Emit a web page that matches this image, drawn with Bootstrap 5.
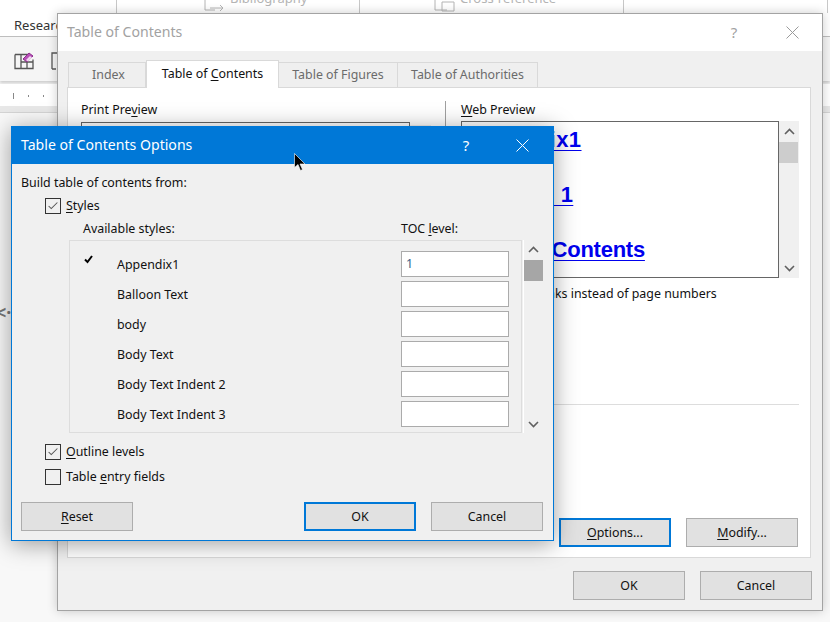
<!DOCTYPE html>
<html lang="en"><head><meta charset="utf-8"><title>Table of Contents Options</title>
<link href="https://cdn.jsdelivr.net/npm/bootstrap@5.3.0/dist/css/bootstrap.min.css" rel="stylesheet">
<style>
html,body{margin:0;height:622px;overflow:hidden;background:#f6f6f6}
body{font:12.4px/16px "Noto Sans",sans-serif;color:#111;position:relative;width:830px}
u{text-underline-offset:2px;text-decoration-thickness:1px}
.desk{height:622px}
.rb-top{height:13px;background:#fff;overflow:hidden;color:#b4b4b4;font-size:13px}
.rb-cell{border-right:1px solid #c8c8c8;height:13px;white-space:nowrap;flex:none}
.rb-cell.c1{width:117px}.rb-cell.c2{width:243px;padding-left:87px}.rb-cell.c3{width:264px;padding-left:74px}.rb-cell.c4{width:204px}
.rb-txt{margin-top:-10px}
.rb-tab{height:24px;background:#fff;padding:4px 0 0 14px;border-bottom:1px solid #bdbdbd;font-size:13px;color:#333}
.rb-tools{height:44px;background:#f5f5f5;padding:14px 0 0 14px;box-shadow:0 2px 3px #ccc}
.rb-ruler{height:22px;margin-top:3px;background:#fff;padding-left:13px;padding-top:11px;gap:14px}
.tick{width:1px;height:2px;background:#888}
.tick.big{height:6px;margin-top:-2px}
.rb-band{height:7px;background:#e8e8e8;border-bottom:1px solid #d4d4d4}
.rb-doc{flex:1;background:#f8f8f8;padding-top:190px;color:#777;font-size:18px;font-weight:700;line-height:18px;overflow:hidden}
.rb-doc span{margin-left:-4px}

.win{position:absolute;background:#f0f0f0}
.outer{left:57px;top:13px;width:766px;height:598px;border:1px solid #a3a3a3;box-shadow:0 0 10px rgba(0,0,0,.2)}
.inner{left:11px;top:126px;width:543px;height:415px;border:1px solid #0078d7;box-shadow:0 3px 22px rgba(0,0,0,.38)}
.ot{height:37px;background:#fff;padding:0 0 1px 9px;font-size:14.1px;color:#a2a2a2}
.it{height:37px;background:#0078d7;color:#fff;padding:0 0 1px 9px;font-size:14.1px}
.tb-q{font-size:15px;width:22px;text-align:center}
.tb-x{margin:0 23px 0 41px;display:block}
.inner .tb-x{margin:0 24px 0 39px}
.tabs{height:36px;padding:10px 0 0 10px;align-items:flex-end}
.tabx{height:25px;background:#efefef;border:1px solid #d9d9d9;border-bottom:0;border-left-width:0;color:#6b6b6b;text-align:center;line-height:24px;flex:none}
.tabx.t1{width:78px;border-left-width:1px;padding-left:3px}.tabx.t2{width:133px;height:28px;margin-bottom:-1px;background:#fff;color:#111;border-left:1px solid #d9d9d9;line-height:26px;position:relative;z-index:1}.tabx.t3{width:119px}.tabx.t4{width:140px}
.panel{margin-left:9px;width:744px;height:471px;background:#fff;border:1px solid #d9d9d9;padding:13px 12px 10px 13px}
.pcol{width:329px;flex:none}
.lb{height:21px;line-height:18px}
.lb.web{height:20px}
.ppbox{height:180px;border:1px solid #666;background:#fff}
.ppbar{width:21px;height:180px;background:#efefef;flex:none}
.vdiv{width:1px;background:#a0a0a0;height:200px;margin-left:14px;margin-right:15px;flex:none}
.wcol{flex:none;margin-right:-1px}
.wrow{height:157px}
.wbox{width:318px;height:157px;border:1px solid #666;padding:5px 3px;overflow:hidden;font:700 22px/26px "Liberation Sans",sans-serif;color:#0000ee;white-space:nowrap;flex:none}
.wbox a{color:#0000ee;display:block;text-underline-offset:3px;text-decoration-thickness:1px;margin-bottom:29px}
.wbox a.w1{letter-spacing:.45px}.wbox a.w2{letter-spacing:.35px}.wbox a.w3{letter-spacing:-.25px}
.sbar{width:20px;background:#f0f0f0;padding-top:7px;flex:none}
.sbar .arw{display:block;margin:0 auto}
.sthumb{height:21px;width:19px;background:#cdcdcd;margin:7px 0 auto}
.hyper{margin-top:8px;padding-left:21px;white-space:nowrap}
.hrl{height:1px;background:#ddd;margin-top:99px;width:718px}
.btnw{width:112px;height:29px;background:#e1e1e1;border:1px solid #adadad;border-radius:0;padding:0;font-size:12.4px;line-height:27px;color:#111;text-align:center;display:block;flex:none}
.btnw:hover{background:#e1e1e1;border-color:#adadad;color:#111}
.btnw.foc,.btnw.foc:hover{border:2px solid #0078d7;line-height:25px}
.pbtns{gap:15px;margin-top:auto}
.obtns{gap:15px;padding:13px 10px 0 0}
.obtns .btnw{line-height:28px}
.ibody{padding:10px 9px 0 9px;height:376px}
.lb.top{height:24px}
.ck{width:16px;height:16px;border:1px solid #333;background:#fff;flex:none;display:block}
.ck.dim{background:#f0f0f0}
.crow{gap:5px;align-items:center;height:16px;margin-left:24px}
.lblrow{height:26px;padding-top:3px;align-items:center;flex:none}
.sl1{margin-left:62px;width:318px}
.sboxwrap{margin-left:48px}
.stylebox{width:453px;height:193px;border:1px solid #ddd;padding:10px 12px 0 0}
.srow{height:30px}
.srow.hasm{position:relative}
.sname{margin-left:47px;width:284px;line-height:28px;flex:none}
.smark{position:absolute;left:14px;top:4px}
.sinp{width:108px;height:26px;border:1px solid #ababab;background:#fff;color:#3a5f88;padding-left:4px;line-height:24px;flex:none}
.sb2{width:20px;height:193px;margin-left:1px;padding-top:6px;background:#f0f0f0;border-left:1px solid #fff}
.sth2{width:19px;height:21px;background:#a6a6a6;margin-top:7px}
.arw-b{margin-bottom:5px}
.sbar .arw-b{margin-bottom:6px}
.c-a{margin-top:11px}
.c-b{margin-top:9px}
.ibtns{gap:15px;padding-right:1px;margin-bottom:9px}
.cursor{position:absolute;left:294px;top:153px}
</style></head><body>
<div class="desk d-flex flex-column">
  <div class="rb-top d-flex">
    <div class="rb-cell c1"></div>
    <div class="rb-cell c2"><div class="rb-txt d-flex gap-1"><svg width="22" height="22" viewBox="0 0 22 22" fill="none" stroke="#b4b4b4"><path d="M1 10v10h10M6 18h13m-3-3 3 3-3 3"/></svg>Bibliography</div></div>
    <div class="rb-cell c3"><div class="rb-txt d-flex gap-1"><svg width="22" height="22" viewBox="0 0 22 22" fill="none" stroke="#b4b4b4"><path d="M1 10v10h12M8 12h12v9H8z"/></svg>Cross-reference</div></div>
    <div class="rb-cell c4"></div>
  </div>
  <div class="rb-tab">Research</div>
  <div class="rb-tools d-flex gap-3">
    <svg width="21" height="20" viewBox="0 0 21 20"><path d="M1 3.500h13M1 3.500v14h18v-9M7 3.500v14M13 11v6M7 11h12" fill="none" stroke="#555" stroke-width="1.300"/><path d="M9 8l6-6 4 3-6 6z" fill="#b84fb8" stroke="#8c2f8c"/><path d="M12 9l4-4 2 1.500-4 4z" fill="#f0d8f0"/></svg>
    <svg width="20" height="20" viewBox="0 0 20 20"><path d="M1 18V2h10M1 18h4" fill="none" stroke="#555" stroke-width="1.300"/></svg>
  </div>
  <div class="rb-ruler d-flex"><span class="tick big"></span><span class="tick"></span><span class="tick"></span></div>
  <div class="rb-band"></div>
  <div class="rb-doc d-flex flex-column"><span>&lt;·</span></div>
</div>

<div class="win outer d-flex flex-column">
  <div class="ot d-flex align-items-center"><span class="flex-grow-1">Table of Contents</span><span class="tb-q">?</span>
    <svg class="tb-x" width="13" height="13" viewBox="0 0 13 13" fill="none" stroke="#9a9a9a"><path d="M.5.500l12 12M12.500.500l-12 12"/></svg></div>
  <div class="tabs d-flex">
    <div class="tabx t1">Index</div><div class="tabx t2">Table of <u>C</u>ontents</div><div class="tabx t3">Table of Figures</div><div class="tabx t4">Table of Authorities</div>
  </div>
  <div class="panel d-flex flex-column">
    <div class="d-flex">
      <div class="pcol">
        <div class="lb">Print Pre<u>v</u>iew</div>
        <div class="d-flex"><div class="ppbox flex-grow-1"></div></div>
      </div>
      <div class="ppbar mt-4"></div>
      <div class="vdiv"></div>
      <div class="wcol">
        <div class="lb web"><u>W</u>eb Preview</div>
        <div class="wrow d-flex">
          <div class="wbox"><a class="w1" href="#">Appendix1</a><a class="w2" href="#">Heading 1</a><a class="w3" href="#">Table of Contents</a></div>
          <div class="sbar d-flex flex-column">
            <svg class="arw" width="11" height="7" viewBox="0 0 11 7" fill="none" stroke="#606060" stroke-width="1.600"><path d="M1 6l4.500-4.500L10 6"/></svg>
            <div class="sthumb"></div>
            <svg class="arw arw-b" width="11" height="7" viewBox="0 0 11 7" fill="none" stroke="#606060" stroke-width="1.600"><path d="M1 1l4.500 4.500L10 1"/></svg>
          </div>
        </div>
        <div class="hyper">Use hyperlinks instead of page numbers</div>
      </div>
    </div>
    <div class="flex-grow-1 d-flex flex-column">
      <div class="hrl"></div>
      <div class="pbtns d-flex justify-content-end">
        <a class="btnw foc text-decoration-none" href="#"><u>O</u>ptions...</a>
        <a class="btnw text-decoration-none" href="#"><u>M</u>odify...</a>
      </div>
    </div>
  </div>
  <div class="obtns d-flex justify-content-end">
    <a class="btnw text-decoration-none" href="#">OK</a>
    <a class="btnw text-decoration-none" href="#">Cancel</a>
  </div>
</div>

<div class="win inner d-flex flex-column">
  <div class="it d-flex align-items-center"><span class="flex-grow-1">Table of Contents Options</span><span class="tb-q">?</span>
    <svg class="tb-x" width="13" height="13" viewBox="0 0 13 13" fill="none" stroke="#fff"><path d="M.5.500l12 12M12.500.500l-12 12"/></svg></div>
  <div class="ibody d-flex flex-column">
    <div class="lb top">Build table of contents from:</div>
    <div class="crow d-flex">
      <svg class="ck dim" viewBox="0 0 16 16" fill="none" stroke="#555" stroke-width="1.200"><path d="M3 8l3 3 7-7"/></svg><span><u>S</u>tyles</span>
    </div>
    <div class="d-flex lblrow">
      <span class="sl1">Available styles:</span><span class="sl2">TOC <u>l</u>evel:</span>
    </div>
    <div class="d-flex sboxwrap">
      <div class="stylebox">
        <div class="srow hasm d-flex"><svg class="smark" width="9" height="9" viewBox="0 0 9 9" fill="none" stroke="#000" stroke-width="2"><path d="M1 4.500l2.500 2.500L8 1"/></svg><span class="sname">Appendix1</span><span class="sinp">1</span></div>
        <div class="srow d-flex"><span class="sname">Balloon Text</span><span class="sinp"></span></div>
        <div class="srow d-flex"><span class="sname">body</span><span class="sinp"></span></div>
        <div class="srow d-flex"><span class="sname">Body Text</span><span class="sinp"></span></div>
        <div class="srow d-flex"><span class="sname">Body Text Indent 2</span><span class="sinp"></span></div>
        <div class="srow d-flex"><span class="sname">Body Text Indent 3</span><span class="sinp"></span></div>
      </div>
      <div class="sb2 d-flex flex-column">
        <svg class="align-self-center" width="11" height="7" viewBox="0 0 11 7" fill="none" stroke="#606060" stroke-width="1.600"><path d="M1 6l4.500-4.500L10 6"/></svg>
        <div class="sth2"></div>
        <svg class="align-self-center mt-auto arw-b" width="11" height="7" viewBox="0 0 11 7" fill="none" stroke="#606060" stroke-width="1.600"><path d="M1 1l4.500 4.500L10 1"/></svg>
      </div>
    </div>
    <div class="crow d-flex c-a">
      <svg class="ck dim" viewBox="0 0 16 16" fill="none" stroke="#555" stroke-width="1.200"><path d="M3 8l3 3 7-7"/></svg><span><u>O</u>utline levels</span>
    </div>
    <div class="crow d-flex c-b">
      <span class="ck dim"></span><span>Table <u>e</u>ntry fields</span>
    </div>
    <div class="d-flex mt-auto ibtns">
      <a class="btnw text-decoration-none" href="#"><u>R</u>eset</a>
      <a class="btnw foc text-decoration-none ms-auto" href="#">OK</a>
      <a class="btnw text-decoration-none" href="#">Cancel</a>
    </div>
  </div>
</div>
<svg class="cursor" width="12" height="19" viewBox="0 0 12 19"><path d="M.500.500v14l3.500-3 2.500 6 2-1-2.500-5.500h5z" fill="#000" stroke="#fff" stroke-width=".6"/></svg>
</body></html>
